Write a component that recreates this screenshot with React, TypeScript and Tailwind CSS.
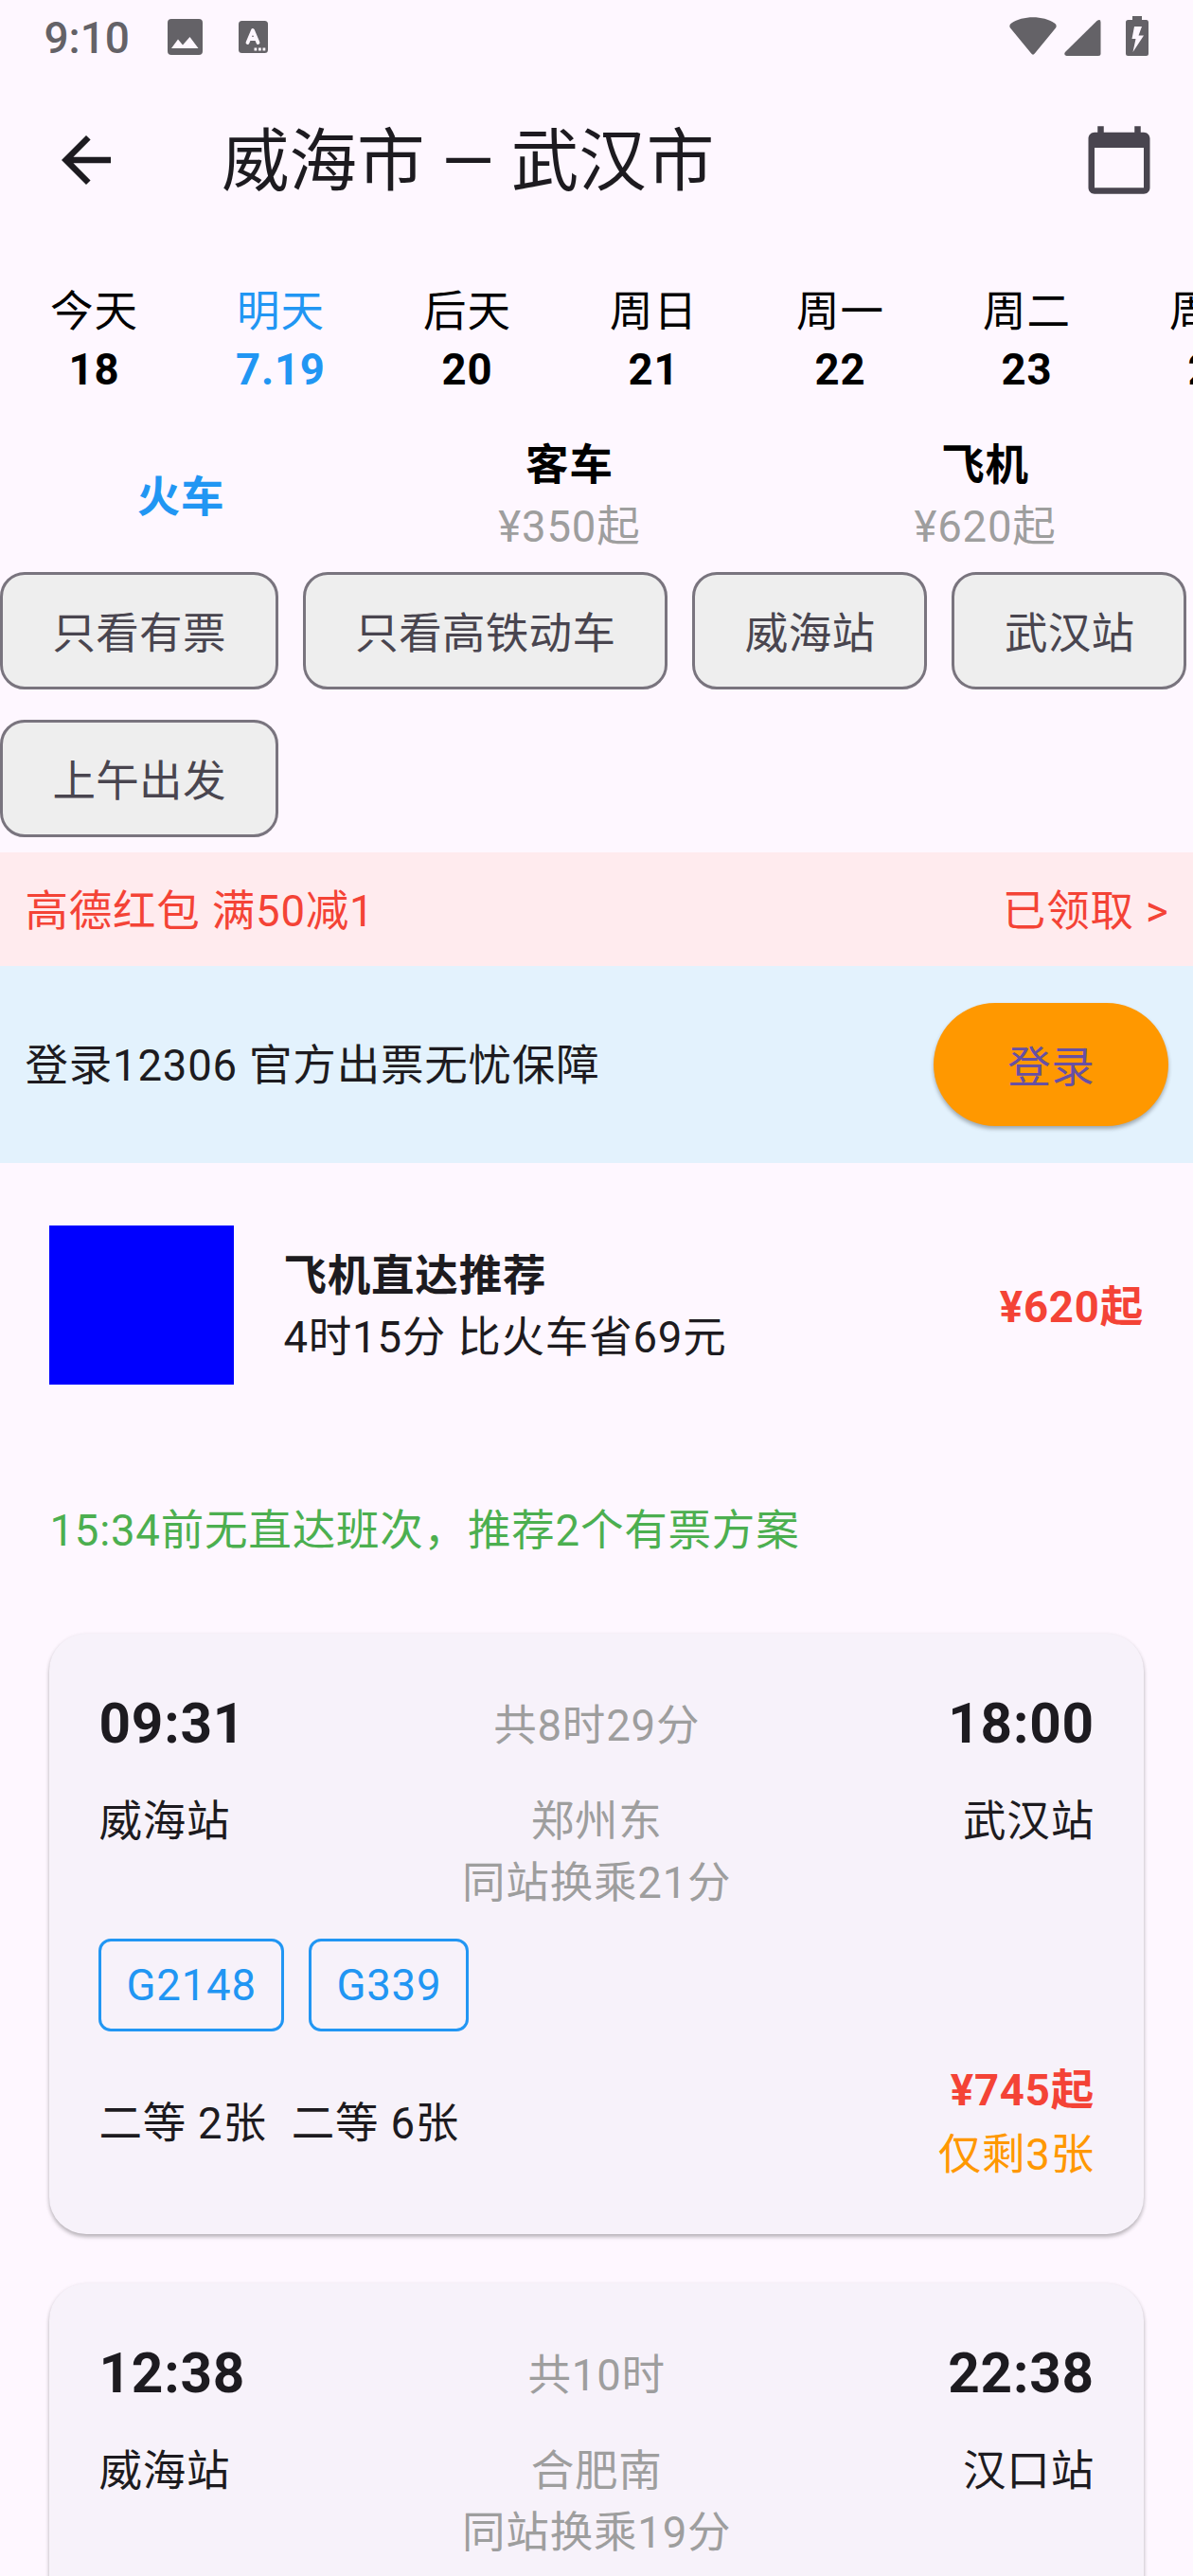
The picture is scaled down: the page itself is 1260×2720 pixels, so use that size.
const days = [
  ["今天", "18"],
  ["明天", "7.19"],
  ["后天", "20"],
  ["周日", "21"],
  ["周一", "22"],
  ["周二", "23"],
  ["周三", "24"],
];

function StatusBar() {
  return (
    <div className="flex h-[78px] shrink-0 items-center pr-[47px] pl-[46px] text-[#646267]">
      <span className="mt-[2px] w-[91px] text-[46px] leading-[60px] font-medium tracking-[0]">9:10</span>
      <svg className="ml-[40px]" width="37" height="38" viewBox="0 0 37 38">
        <rect width="37" height="38" rx="4" fill="currentColor" />
        <path d="M4 31 L11 21.5 L16 27.5 L23.5 19 L32.5 31Z" fill="#fef7ff" />
      </svg>
      <svg className="ml-[38px]" width="31" height="34" viewBox="0 0 31 34">
        <rect width="31" height="34" rx="3.500" fill="currentColor" />
        <path d="M9.500 23 L15 10 L20.500 23 M12 19H18.500" fill="none" stroke="#fef7ff" strokeWidth="3.800" strokeLinecap="round" strokeLinejoin="round" />
        <path d="M16.500 28.500h2.800v3h-2.800zM21 28.500h2.800v3h-2.800zM25.500 28.500h2.800v3h-2.800z" fill="#fef7ff" />
      </svg>
      <div className="mt-[-2px] ml-auto flex items-end">
        <svg className="mb-[1px]" width="50" height="40" viewBox="0 0 50 40">
          <path d="M1 11.500 Q-.8 8.500 2.200 6.600 C14-1.800 36-1.800 47.800 6.600 Q50.800 8.500 49 11.500 L27 38.300 Q25 41 23 38.300Z" fill="currentColor" />
        </svg>
        <svg className="ml-[8px]" width="39" height="38" viewBox="0 0 39 38">
          <path d="M1 34 L34.500 1 Q38.500-1.500 38.500 2.500 V35.500 Q38.500 38 36 38 H2.500 Q-1 37 1 34Z" fill="currentColor" />
        </svg>
        <svg className="ml-[26px]" width="24" height="42" viewBox="0 0 24 42">
          <path d="M7 0H17V4H22Q24 4 24 6.500V39.500Q24 42 21.500 42H2.500Q0 42 0 39.500V6.500Q0 4 2.500 4H7Z" fill="currentColor" />
          <path d="M9 11H17L13.500 20.500H19L7.500 38L10.500 24H6.500Z" fill="#fef7ff" />
        </svg>
      </div>
    </div>
  );
}

function Header() {
  return (
    <div className="flex h-[182px] shrink-0 items-center pr-[39px] pl-[52px]">
      <svg width="78" height="78" viewBox="0 0 24 24" fill="#1d1b20">
        <path d="M20 11H7.830l5.590-5.590L12 4l-8 8 8 8 1.410-1.410L7.830 13H20v-2z" />
      </svg>
      <h1 className="mt-[2px] ml-[103.600px] text-[71.500px] leading-[91px] tracking-[0] text-[#1d1b20]">威海市 — 武汉市</h1>
      <svg className="ml-auto" width="78" height="78" viewBox="0 0 24 24" fill="#49454f">
        <path d="M20 3h-1V1h-2v2H7V1H5v2H4c-1.100 0-2 .9-2 2v16c0 1.100.9 2 2 2h16c1.100 0 2-.9 2-2V5c0-1.100-.9-2-2-2zm0 18H4V8h16v13z" />
      </svg>
    </div>
  );
}

function DayPicker() {
  return (
    <div className="flex h-[195px] shrink-0 items-center overflow-hidden pt-[4px] pl-[0.500px] indent-[0.810px]">
      {days.map(([day, date]) => (
        <div
          key={day}
          className={
            "flex w-[197px] shrink-0 flex-col items-center " + (day === "明天" ? "text-[#2196f3]" : "text-black")
          }
        >
          <span className="leading-[61px]">{day}</span>
          <span className="leading-[61px] font-bold">{date}</span>
        </div>
      ))}
    </div>
  );
}

function Modes() {
  return (
    <div className="flex h-[133px] shrink-0 items-center justify-around pt-[4px]">
      <div className="pt-[4px] font-bold text-[#2196f3]">火车</div>
      <div className="flex flex-col items-center leading-[65px]">
        <span className="font-bold text-black">客车</span>
        <span className="text-[#9e9e9e]">¥350起</span>
      </div>
      <div className="flex flex-col items-center leading-[65px]">
        <span className="font-bold text-black">飞机</span>
        <span className="text-[#9e9e9e]">¥620起</span>
      </div>
    </div>
  );
}

function Filters() {
  return (
    <div className="flex h-[312px] shrink-0 flex-wrap content-start gap-x-[26px] tracking-[0.320px]">
      {["只看有票", "只看高铁动车", "威海站", "武汉站", "上午出发"].map((label) => (
        <div key={label} className="flex h-[156px] items-center">
          <div className="flex h-[124px] items-center rounded-[26px] border-[3px] border-[#79747e] bg-[#eeeeee] px-[52.100px] pt-[7px] text-[#49454f]">
            {label}
          </div>
        </div>
      ))}
    </div>
  );
}

type Trip = {
  from: string;
  to: string;
  start: string;
  end: string;
  total: string;
  via: string;
  wait: string;
  trains: string[];
  seats: string[];
  price: string;
  left: string;
};

const trips: Trip[] = [
  {
    from: "威海站", to: "武汉站", start: "09:31", end: "18:00", total: "共8时29分", via: "郑州东",
    wait: "同站换乘21分", trains: ["G2148", "G339"], seats: ["二等 2张", "二等 6张"], price: "¥745起", left: "仅剩3张",
  },
  {
    from: "威海站", to: "汉口站", start: "12:38", end: "22:38", total: "共10时", via: "合肥南",
    wait: "同站换乘19分", trains: [], seats: [], price: "", left: "",
  },
];

function TripCard({ trip }: { trip: Trip }) {
  return (
    <div className="mx-[52px] mb-[52px] h-[634px] shrink-0 rounded-[39px] bg-[#f7f2fa] px-[52px] pt-[53px] shadow-[0_3px_4px_rgba(0,0,0,0.25),0_1px_5px_rgba(0,0,0,0.06)]">
      <div className="flex h-[84px] items-center justify-between">
        <span className="text-[58.500px] font-bold">{trip.start}</span>
        <span className="mt-[4px] text-[#9e9e9e]">{trip.total}</span>
        <span className="text-[58.500px] font-bold">{trip.end}</span>
      </div>
      <div className="mt-[29px] flex items-start justify-between leading-[65px]">
        <span>{trip.from}</span>
        <div className="flex flex-col items-center text-[#9e9e9e]">
          <span>{trip.via}</span>
          <span>{trip.wait}</span>
        </div>
        <span>{trip.to}</span>
      </div>
      <div className="mt-[26px] flex gap-[26px]">
        {trip.trains.map((t) => (
          <div key={t} className="flex h-[98px] items-center rounded-[13px] border-[3px] border-[#2196f3] px-[26.100px] pt-[1px] text-[#2196f3]">
            {t}
          </div>
        ))}
      </div>
      <div className="mt-[29px] flex items-center justify-between">
        <div className="flex gap-[25.500px]">
          {trip.seats.map((s) => (
            <span key={s}>{s}</span>
          ))}
        </div>
        <div className="flex flex-col items-end leading-[68px]">
          <span className="font-bold text-[#f44336]">{trip.price}</span>
          <span className="text-[#ff9800]">{trip.left}</span>
        </div>
      </div>
    </div>
  );
}

export default function App() {
  return (
    <div className="flex h-[2720px] w-[1260px] flex-col overflow-hidden bg-[#fef7ff] indent-[0.400px] font-[Roboto,'Noto_Sans_CJK_SC',sans-serif] text-[45.500px] leading-[65px] tracking-[0.810px] whitespace-nowrap text-[#1d1b20]">
      <StatusBar />
      <Header />
      <DayPicker />
      <Modes />
      <Filters />
      <div className="flex h-[120px] shrink-0 items-center justify-between bg-[#ffebee] pt-[4px] pr-[25.500px] pl-[26px] text-[#f44336]">
        <span>高德红包 满50减1</span>
        <span>已领取 &gt;</span>
      </div>
      <div className="flex h-[208px] shrink-0 items-center justify-between bg-[#e3f2fd] pr-[26px] pl-[26px]">
        <span className="pt-[3px]">登录12306 官方出票无忧保障</span>
        <button className="h-[130px] rounded-full bg-[#ff9800] px-[78px] pt-[7px] tracking-[0.320px] text-[#6750a4] shadow-[0_3px_4px_rgba(0,0,0,0.3)]">
          登录
        </button>
      </div>
      <div className="flex h-[300px] shrink-0 items-center px-[52px]">
        <div className="h-[168px] w-[195px] bg-[#0000ff]" />
        <div className="ml-[52px] flex flex-col pt-[3px] leading-[65px]">
          <span className="font-bold">飞机直达推荐</span>
          <span>4时15分 比火车省69元</span>
        </div>
        <span className="ml-auto pt-[4px] font-bold text-[#f44336]">¥620起</span>
      </div>
      <div className="flex h-[197px] shrink-0 items-center px-[52px] pb-[21px]">
        <span className="text-[#4caf50]">15:34前无直达班次，推荐2个有票方案</span>
      </div>
      {trips.map((t) => (
        <TripCard key={t.start} trip={t} />
      ))}
    </div>
  );
}
